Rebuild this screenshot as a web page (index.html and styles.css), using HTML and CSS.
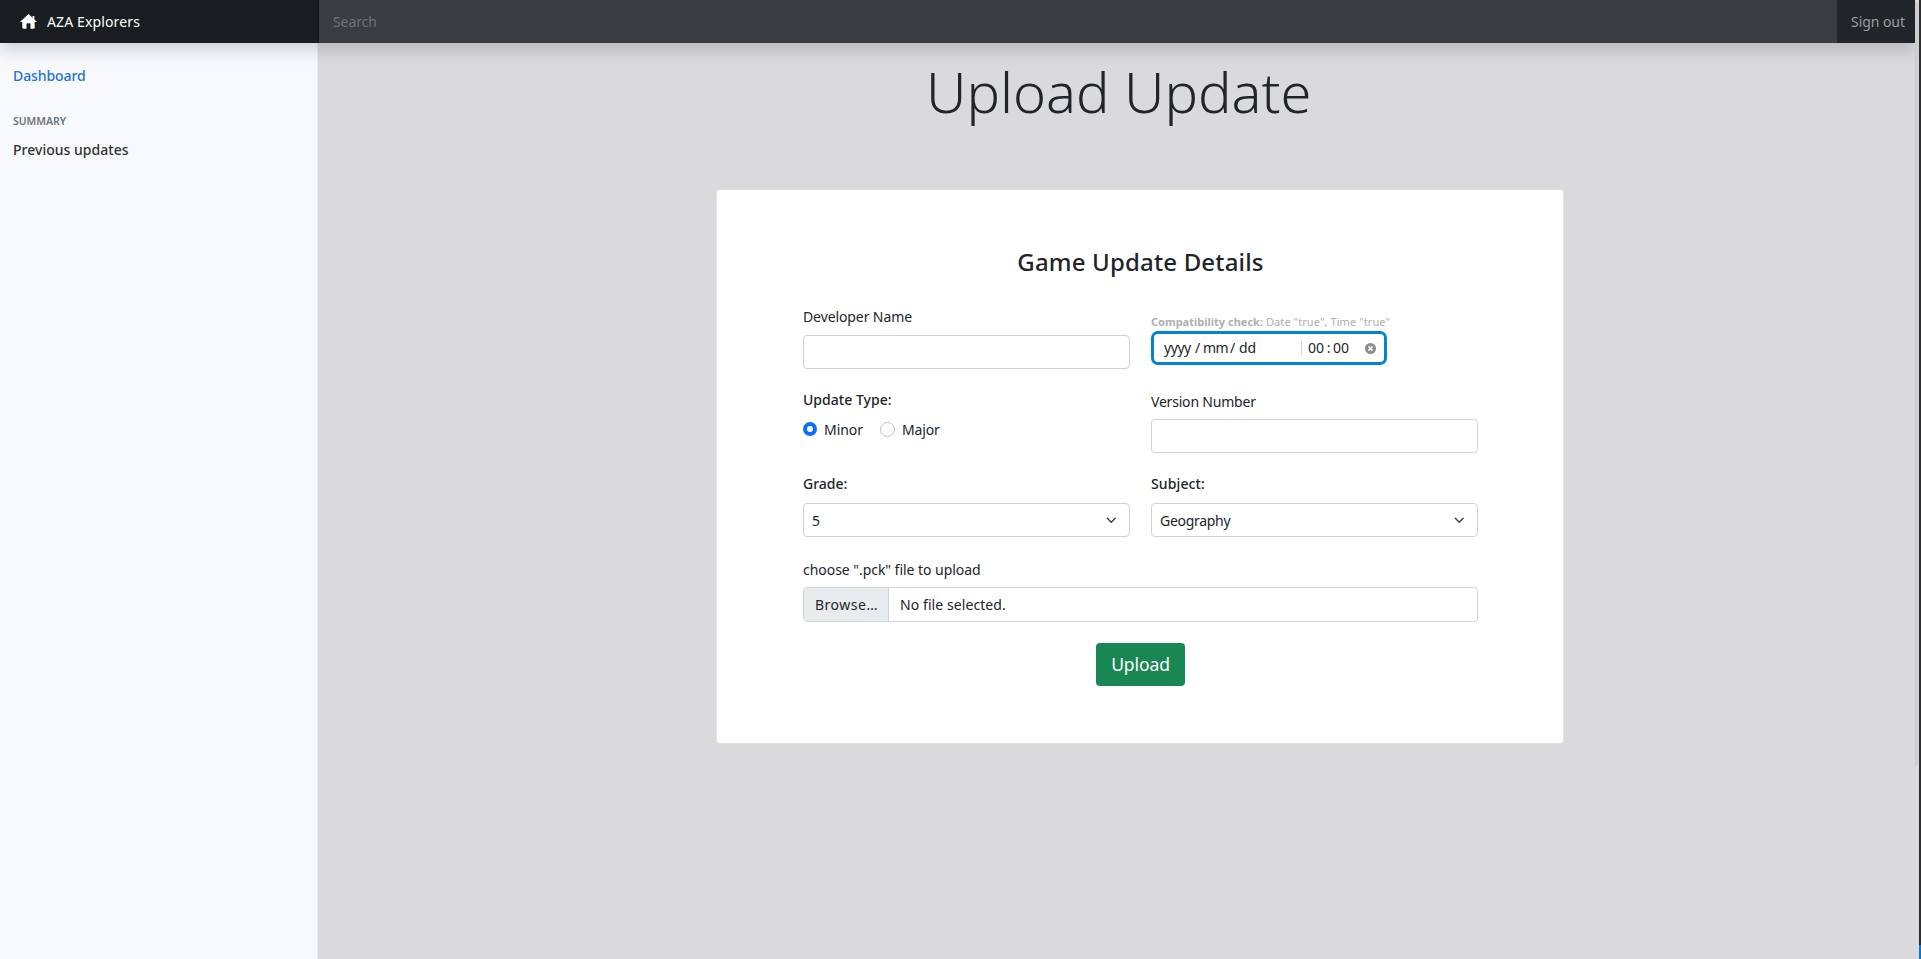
FILE: index.html
```
<!DOCTYPE html>
<html lang="en">
<head>
<meta charset="utf-8">
<title>AZA Explorers</title>
<link rel="stylesheet" href="styles.css">
</head>
<body>
<div class="window">
  <header class="navbar">
    <a class="brand">
      <svg class="home" viewBox="0 0 17 15"><path d="M8.5 0 0 8h2.3v5.6c0 .8.5 1.2 1.2 1.2h3V10c0-.5.3-.8.8-.8h2.4c.5 0 .8.3.8.8v4.8h3c.7 0 1.200-.4 1.200-1.200V8H17l-2.600-2.500V2h-1.800v1.800z"/></svg>
      <span>AZA Explorers</span>
    </a>
    <div class="search">Search</div>
    <a class="signout">Sign out</a>
  </header>
  <div class="body">
    <nav class="sidebar">
      <a class="link active">Dashboard</a>
      <h6 class="group">SUMMARY</h6>
      <a class="link">Previous updates</a>
    </nav>
    <main class="main">
      <h1 class="title">Upload Update</h1>
      <section class="card">
        <h3 class="card-title">Game Update Details</h3>
        <div class="grid">
          <div class="cell">
            <label class="label dev">Developer Name</label>
            <div class="input"></div>
          </div>
          <div class="cell date-cell">
            <p class="compat"><b>Compatibility check:</b><span>Date "true", Time "true"</span></p>
            <div class="datetime">
              <div class="date"><span class="yyyy">yyyy</span><span class="slash">/</span><span class="mm">mm</span><span class="slash">/</span><span>dd</span></div>
              <div class="time"><span>00</span><span class="colon">:</span><span>00</span></div>
              <svg class="clear" viewBox="0 0 11 11"><circle cx="5.500" cy="5.500" r="5.500"/><path d="M3.400 3.400l4.200 4.200M7.600 3.400L3.400 7.600"/></svg>
            </div>
          </div>
          <div class="cell">
            <label class="label strong type">Update Type:</label>
            <div class="radios">
              <span class="radio checked"></span><span class="minor">Minor</span>
              <span class="radio"></span><span class="major">Major</span>
            </div>
          </div>
          <div class="cell version-cell">
            <label class="label version">Version Number</label>
            <div class="input"></div>
          </div>
          <div class="cell select-cell">
            <label class="label strong">Grade:</label>
            <div class="input select"><span>5</span><svg class="chevron" viewBox="0 0 16 16"><path d="M2 5l6 6 6-6"/></svg></div>
          </div>
          <div class="cell select-cell">
            <label class="label strong subject">Subject:</label>
            <div class="input select"><span class="geo">Geography</span><svg class="chevron" viewBox="0 0 16 16"><path d="M2 5l6 6 6-6"/></svg></div>
          </div>
        </div>
        <label class="label choose">choose ".pck" file to upload</label>
        <div class="file"><span class="browse">Browse…</span><span class="none">No file selected.</span></div>
        <button class="upload">Upload</button>
      </section>
    </main>
  </div>
  <div class="scrollbar"></div>
  <div class="desktop-edge"></div>
</div>
</body>
</html>
```
FILE: styles.css
```
* { box-sizing: border-box; }
body {
  margin: 0;
  font: 400 14px/21px "Noto Sans", "Open Sans", sans-serif;
  color: #212529;
  background: #dadadc;
}
h1, h3, h6, p { margin: 0; }
.window {
  position: relative;
  display: flex;
  flex-direction: column;
  height: 959px;
  overflow: hidden;
}

/* Top bar */
.navbar {
  position: relative;
  z-index: 2;
  display: flex;
  height: 43px;
  flex: none;
  width: 1915px;
  background: #212529;
  box-shadow: 0 8px 16px rgba(0, 0, 0, .15);
}
.brand {
  display: flex;
  align-items: flex-start;
  width: 319px;
  padding: 11px 0 0 20px;
  gap: 10px;
  color: #fff;
  letter-spacing: .13px;
  background: #191d20;
  box-shadow: inset -1px 0 0 #14171a;
}
.home { width: 17px; height: 15px; margin-top: 3px; fill: #fff; }
.search {
  flex: 1;
  padding: 11px 14px;
  color: #6c757d;
  letter-spacing: -.1px;
  background: #393c40;
}
.signout {
  width: 78px;
  padding: 11px 0 0 14px;
  color: #9b9d9f;
  letter-spacing: -.05px;
}

/* Sidebar */
.body { display: flex; flex: 1; }
.sidebar {
  width: 319px;
  padding: 22px 13px;
  background: #f8f9fc;
  box-shadow: inset -1px 0 0 #e8e9ec;
}
.link { display: block; font-weight: 500; color: #333; letter-spacing: .02px; }
.link.active { color: #2470dc; letter-spacing: -.08px; }
.group {
  margin: 29px 0 11px;
  font-size: 10.5px;
  line-height: 13px;
  font-weight: 600;
  letter-spacing: -.05px;
  color: #6c757d;
}

/* Main content */
.main { flex: 1; padding: 15px 357px 0 398px; }
.title {
  padding-left: 210px;
  font-size: 56px;
  line-height: 67px;
  font-weight: 300;
  letter-spacing: -.02px;
  white-space: nowrap;
}
.card {
  display: flex;
  flex-direction: column;
  width: 848px;
  height: 555px;
  margin-top: 64px;
  padding: 57px 85px 57px 86px;
  background: #fff;
  border: 1px solid #e3e3e4;
  border-radius: 4px;
}
.card-title {
  font-size: 24px;
  line-height: 29px;
  font-weight: 500;
  letter-spacing: .17px;
  text-align: center;
}
.grid {
  display: grid;
  grid-template: 83px 84px 86px / 327px 327px;
  column-gap: 21px;
  margin-top: 30px;
}
.cell { display: flex; flex-direction: column; gap: 8px; }
.label { display: block; }
.strong { font-weight: 500; }
.dev { letter-spacing: -.1px; }
.type { letter-spacing: .03px; }
.version { letter-spacing: -.2px; }
.subject { letter-spacing: .11px; }
.choose { letter-spacing: -.04px; }
.input {
  height: 34px;
  border: 1px solid #ced4da;
  border-radius: 4px;
  background: #fff;
}
.version-cell { padding-top: 2px; gap: 7px; }
.select-cell { gap: 9px; }
.select {
  display: flex;
  align-items: center;
  justify-content: space-between;
  padding: 1px 13px 0 8px;
}
.geo { letter-spacing: -.3px; }
.chevron { width: 10.500px; height: 10.500px; margin-bottom: 1px; fill: none; stroke: #343a40; stroke-width: 2; stroke-linecap: round; stroke-linejoin: round; }

/* Date and time field */
.date-cell { padding-top: 7px; gap: 0; }
.compat {
  display: flex;
  gap: 3px;
  height: 18px;
  font-size: 11px;
  line-height: 18px;
  color: #afafaf;
  white-space: nowrap;
}
.compat span { letter-spacing: .08px; }
.datetime {
  display: flex;
  align-items: center;
  width: 236px;
  height: 34px;
  padding: 0 8px 0 10px;
  border: 3px solid #0084d1;
  border-radius: 7px;
}
.date { display: flex; width: 137px; height: 14px; line-height: 14px; }
.date .yyyy { width: 31px; letter-spacing: -.45px; }
.date .mm { width: 27px; letter-spacing: -.5px; }
.date .mm { margin-left: -1px; }
.date .slash { width: 9px; }
.time {
  display: flex;
  width: 59px;
  height: 14px;
  line-height: 14px;
  padding-left: 6px;
  border-left: 1px solid #d5d5d5;
}
.colon { width: 9px; text-align: center; }
.clear { width: 11px; height: 11px; margin-left: 5px; fill: #8b8c8d; }
.clear path { stroke: #fff; stroke-width: 1.500; }

/* Radio buttons */
.radios { display: flex; align-items: center; margin-top: 1px; }
.radio {
  width: 15px;
  height: 15px;
  margin-right: 7px;
  margin-bottom: 1px;
  border: 1px solid #bfbfbf;
  border-radius: 50%;
}
.radio.checked { border: 4.500px solid #0d6efd; width: 14px; height: 14px; }
.minor { width: 56px; letter-spacing: -.05px; }
.major { letter-spacing: -.15px; }

/* File picker */
.file {
  display: flex;
  flex: none;
  width: 675px;
  height: 35px;
  margin-top: 7px;
  line-height: 33px;
  border: 1px solid #ced4da;
  border-radius: 4px;
  overflow: hidden;
}
.browse {
  width: 85px;
  padding-left: 11px;
  background: #e9ecef;
  border-right: 1px solid #ced4da;
  letter-spacing: .5px;
}
.none { padding-left: 11px; letter-spacing: .08px; }
.upload {
  flex: none;
  align-self: center;
  width: 89px;
  height: 43px;
  margin-top: 21px;
  padding: 0 0 2px;
  font: 400 17.500px/26px "Noto Sans", "Open Sans", sans-serif;
  letter-spacing: -.09px;
  color: #fff;
  background: #198754;
  border: 0;
  border-radius: 4px;
}

/* Overlay scrollbar and the strip beyond the window */
.scrollbar {
  position: absolute;
  z-index: 3;
  top: 2px;
  left: 1915px;
  width: 3px;
  height: 763px;
  background: #cdcdce;
  border-radius: 2px;
}
.desktop-edge {
  position: absolute;
  z-index: 3;
  top: 0;
  right: 0;
  width: 2px;
  height: 959px;
  background: linear-gradient(#2d2d2d 945px, #0078d4 945px);
}
```
